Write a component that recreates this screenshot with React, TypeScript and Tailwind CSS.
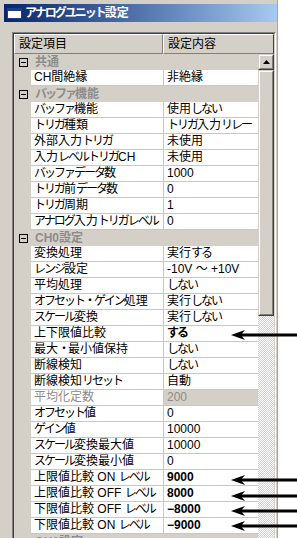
import React from "react";

type Row =
  | { kind: "group"; label: string }
  | { kind: "item"; name: string; value: string; bold?: boolean; disabled?: boolean };

const rows: Row[] = [
  { kind: "group", label: "共通" },
  { kind: "item", name: "CH間絶縁", value: "非絶縁" },
  { kind: "group", label: "バッファ機能" },
  { kind: "item", name: "バッファ機能", value: "使用しない" },
  { kind: "item", name: "トリガ種類", value: "トリガ入力リレー" },
  { kind: "item", name: "外部入力トリガ", value: "未使用" },
  { kind: "item", name: "入力レベルトリガCH", value: "未使用" },
  { kind: "item", name: "バッファデータ数", value: "1000" },
  { kind: "item", name: "トリガ前データ数", value: "0" },
  { kind: "item", name: "トリガ周期", value: "1" },
  { kind: "item", name: "アナログ入力トリガレベル", value: "0" },
  { kind: "group", label: "CH0設定" },
  { kind: "item", name: "変換処理", value: "実行する" },
  { kind: "item", name: "レンジ設定", value: "-10V ～ +10V" },
  { kind: "item", name: "平均処理", value: "しない" },
  { kind: "item", name: "オフセット・ゲイン処理", value: "実行しない" },
  { kind: "item", name: "スケール変換", value: "実行しない" },
  { kind: "item", name: "上下限値比較", value: "する", bold: true },
  { kind: "item", name: "最大・最小値保持", value: "しない" },
  { kind: "item", name: "断線検知", value: "しない" },
  { kind: "item", name: "断線検知リセット", value: "自動" },
  { kind: "item", name: "平均化定数", value: "200", disabled: true },
  { kind: "item", name: "オフセット値", value: "0" },
  { kind: "item", name: "ゲイン値", value: "10000" },
  { kind: "item", name: "スケール変換最大値", value: "10000" },
  { kind: "item", name: "スケール変換最小値", value: "0" },
  { kind: "item", name: "上限値比較 ON レベル", value: "9000", bold: true },
  { kind: "item", name: "上限値比較 OFF レベル", value: "8000", bold: true },
  { kind: "item", name: "下限値比較 OFF レベル", value: "−8000", bold: true },
  { kind: "item", name: "下限値比較 ON レベル", value: "−9000", bold: true },
  { kind: "group", label: "CH1設定" },
];

// Kana in the reference's UI font are proportional (narrower than kanji),
// so kana runs are drawn with tighter tracking.
function Ja({ text }: { text: string }) {
  const parts = text.split(/([\u3040-\u30ff]+)/);
  return (
    <>
      {parts.map((p, i) =>
        /^[\u3040-\u30ff]+$/.test(p) ? (
          <span key={i} className="tracking-[-2px]">
            {p}
          </span>
        ) : (
          <span key={i}>{p}</span>
        )
      )}
    </>
  );
}

function MinusBox() {
  return (
    <div className="w-[9px] h-[9px] border border-black flex items-center justify-center">
      <div className="w-[5px] h-px bg-black" />
    </div>
  );
}

function Arrow({ top }: { top: number }) {
  return (
    <svg
      className="absolute left-[231px]"
      style={{ top }}
      width="66"
      height="10"
      viewBox="0 0 66 10"
    >
      <polygon points="0,5 14,0 11,3.5 66,3.5 66,6.5 11,6.5 14,10" fill="#000" />
    </svg>
  );
}

function GridRow({ row }: { row: Row }) {
  if (row.kind === "group") {
    return (
      <div className="flex h-[16px] bg-[#d4d0c8]">
        <div className="w-[17px] flex items-center pl-[5px]">
          <MinusBox />
        </div>
        <div className="flex-1 pl-[4px] leading-[16px] font-bold text-[#8c8c8c] whitespace-nowrap">
          <Ja text={row.label} />
        </div>
      </div>
    );
  }
  return (
    <div className="flex h-[16px]">
      <div className="w-[17px] bg-[#d4d0c8]" />
      <div
        className={`w-[133px] bg-white border-b border-r border-[#cbc7bf] pl-[3px] leading-[15px] whitespace-nowrap overflow-hidden ${
          row.disabled ? "text-[#8c8c8c]" : "text-black"
        }`}
      >
        <Ja text={row.name} />
      </div>
      <div
        className={`flex-1 border-b border-[#cbc7bf] pl-[3px] leading-[15px] whitespace-nowrap overflow-hidden ${
          row.disabled ? "bg-[#d4d0c8] text-[#8c8c8c]" : "bg-white text-black"
        } ${row.bold ? "font-bold" : ""}`}
      >
        <Ja text={row.value} />
      </div>
    </div>
  );
}

export default function App() {
  return (
    <div className='relative w-[297px] h-[538px] overflow-hidden bg-white font-["Liberation_Sans","Noto_Sans_CJK_JP",sans-serif] text-[12px] leading-none'>
      <div className="w-[278px] h-full bg-[#d4d0c8] border-r border-[#a8a49c] pt-[4px] pl-[4px]">
        {/* Title bar */}
        <div className="h-[18px] w-[273px] bg-gradient-to-r from-[#0a246a] to-[#a6caf0] flex items-center">
          <svg className="ml-[3px]" width="15" height="11" viewBox="0 0 15 11">
            <rect x="0.5" y="0.5" width="14" height="10" fill="#fff" stroke="#1c3c8c" />
            <rect x="0" y="0" width="15" height="3" fill="#1c3c8c" />
          </svg>
          <span className="ml-[3px] text-white font-bold text-[12px] leading-none whitespace-nowrap">
            <Ja text="アナログユニット設定" />
          </span>
        </div>

        {/* Grid frame */}
        <div className="mt-[10px] ml-[8px] w-[264px] h-[600px] border-t border-l border-[#808080] border-r border-r-white border-b border-b-white">
          <div className="h-full border-t border-l border-[#404040] border-r border-r-[#d4d0c8]">
            {/* Header */}
            <div className="flex h-[20px]">
              <div className="w-[149px] bg-[#d4d0c8] border-t border-l border-white border-r border-b border-r-[#808080] border-b-[#808080] pl-[4px] flex items-center text-black">
                設定項目
              </div>
              <div className="flex-1 bg-[#d4d0c8] border-t border-l border-white border-r border-b border-r-[#404040] border-b-[#808080] pl-[4px] flex items-center text-black">
                設定内容
              </div>
            </div>
            <div className="flex">
              <div className="w-[244px]">
                {rows.map((r, i) => (
                  <GridRow key={i} row={r} />
                ))}
              </div>
              {/* Scrollbar */}
              <div className="w-[16px] flex flex-col">
                <div className="h-[16px] bg-[#d4d0c8] border-t border-l border-[#d4d0c8] border-r border-b border-r-[#404040] border-b-[#404040]">
                  <div className="h-full border-t border-l border-white border-r border-b border-r-[#808080] border-b-[#808080] flex items-center justify-center">
                    <svg width="7" height="4" viewBox="0 0 7 4">
                      <polygon points="3.5,0 7,4 0,4" fill="#000" />
                    </svg>
                  </div>
                </div>
                <div className="h-[246px] bg-[#d4d0c8] border-t border-l border-[#d4d0c8] border-r border-b border-r-[#404040] border-b-[#404040]">
                  <div className="h-full border-t border-l border-white border-r border-b border-r-[#808080] border-b-[#808080]" />
                </div>
                <div className="h-[300px] bg-[repeating-conic-gradient(#d4d0c8_0%_25%,#ffffff_0%_50%)] [background-size:2px_2px]" />
              </div>
            </div>
          </div>
        </div>
      </div>

      {/* Annotation arrows */}
      <Arrow top={330} />
      <Arrow top={475} />
      <Arrow top={491} />
      <Arrow top={506} />
      <Arrow top={521} />
    </div>
  );
}
